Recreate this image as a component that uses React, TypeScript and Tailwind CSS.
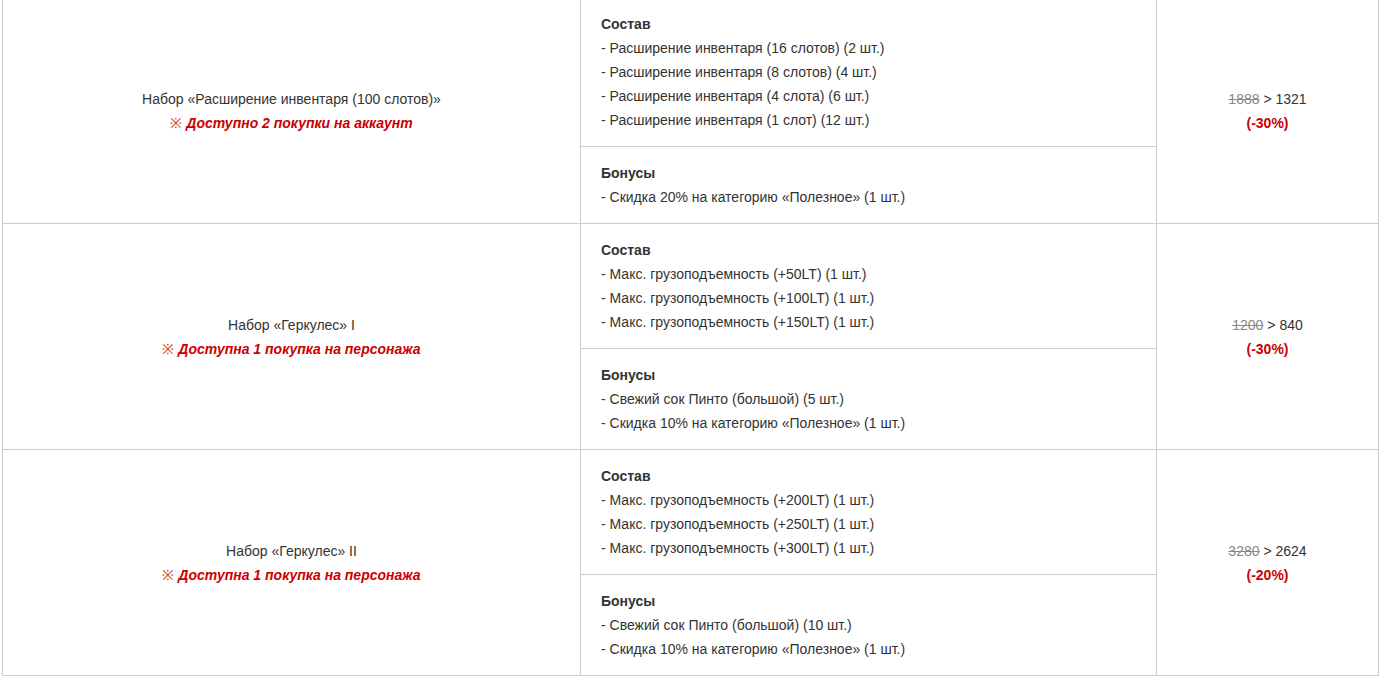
const packs = [
  {
    name: "Набор «Расширение инвентаря (100 слотов)»",
    limit: "Доступно 2 покупки на аккаунт",
    items: [
      "- Расширение инвентаря (16 слотов) (2 шт.)",
      "- Расширение инвентаря (8 слотов) (4 шт.)",
      "- Расширение инвентаря (4 слота) (6 шт.)",
      "- Расширение инвентаря (1 слот) (12 шт.)",
    ],
    bonuses: ["- Скидка 20% на категорию «Полезное» (1 шт.)"],
    oldPrice: "1888",
    price: "1321",
    discount: "(-30%)",
  },
  {
    name: "Набор «Геркулес» I",
    limit: "Доступна 1 покупка на персонажа",
    items: [
      "- Макс. грузоподъемность (+50LT) (1 шт.)",
      "- Макс. грузоподъемность (+100LT) (1 шт.)",
      "- Макс. грузоподъемность (+150LT) (1 шт.)",
    ],
    bonuses: [
      "- Свежий сок Пинто (большой) (5 шт.)",
      "- Скидка 10% на категорию «Полезное» (1 шт.)",
    ],
    oldPrice: "1200",
    price: "840",
    discount: "(-30%)",
  },
  {
    name: "Набор «Геркулес» II",
    limit: "Доступна 1 покупка на персонажа",
    items: [
      "- Макс. грузоподъемность (+200LT) (1 шт.)",
      "- Макс. грузоподъемность (+250LT) (1 шт.)",
      "- Макс. грузоподъемность (+300LT) (1 шт.)",
    ],
    bonuses: [
      "- Свежий сок Пинто (большой) (10 шт.)",
      "- Скидка 10% на категорию «Полезное» (1 шт.)",
    ],
    oldPrice: "3280",
    price: "2624",
    discount: "(-20%)",
  },
];

function Block({ title, lines }: { title: string; lines: string[] }) {
  return (
    <div className="px-5 py-[14px]">
      <div className="font-bold">{title}</div>
      {lines.map((l) => (
        <div key={l}>{l}</div>
      ))}
    </div>
  );
}

export default function App() {
  return (
    <div className="bg-white min-h-screen pl-[2px] overflow-hidden">
      <table
        className="-mt-[3px] border-collapse w-[1376px] table-fixed text-[14px] leading-6 text-[#333]"
        style={{ fontFamily: '"Liberation Sans", Arial, sans-serif' }}
      >
        <colgroup>
          <col className="w-[578px]" />
          <col className="w-[576px]" />
          <col className="w-[222px]" />
        </colgroup>
        <tbody>
          {packs.map((p) => [
            <tr key={p.name + "a"}>
              <td rowSpan={2} className="border border-[#ccc] text-center align-middle">
                <div>{p.name}</div>
                <div className="text-[#c00] font-bold italic">
                  <span className="not-italic font-normal text-[#d2410f]">※</span> {p.limit}
                </div>
              </td>
              <td className="border border-[#ccc] p-0 align-top">
                <Block title="Состав" lines={p.items} />
              </td>
              <td rowSpan={2} className="border border-[#ccc] text-center align-middle">
                <div>
                  <span className="line-through text-[#888]">{p.oldPrice}</span> &gt; {p.price}
                </div>
                <div className="text-[#c00] font-bold">{p.discount}</div>
              </td>
            </tr>,
            <tr key={p.name + "b"}>
              <td className="border border-[#ccc] p-0 align-top">
                <Block title="Бонусы" lines={p.bonuses} />
              </td>
            </tr>,
          ])}
        </tbody>
      </table>
    </div>
  );
}
